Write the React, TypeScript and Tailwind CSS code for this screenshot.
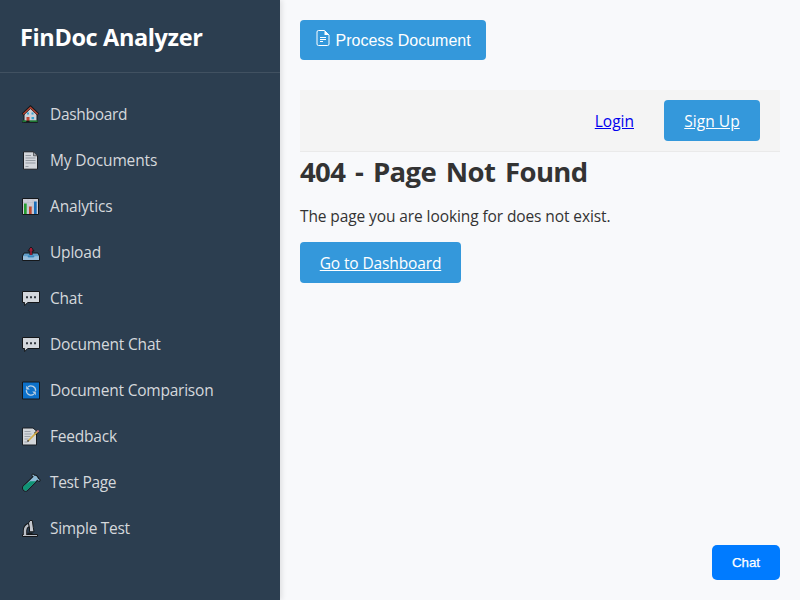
import React from 'react';

const Svg = ({ children }: { children: React.ReactNode }) => (
  <svg className="h-5 w-5 shrink-0 opacity-85" viewBox="0 0 20 20" fill="none">
    {children}
  </svg>
);

const House = () => (
  <Svg>
    <path d="M3 9v8h13V9L9.5 3z" fill="#e9e9ee" stroke="#111" strokeWidth="1" />
    <path d="M1.6 9.6 9.5 2l7.8 7.6" stroke="#111" strokeWidth="2.8" />
    <path d="M2.2 9.2 9.5 2.4l7.2 6.8" stroke="#d0442c" strokeWidth="1.4" />
    <path d="M6 7.5h2v2H6zM10.5 7.5h2v2h-2zM10.5 12h2.6v2.3h-2.6z" fill="#37b5e8" />
    <path d="M5.5 12h3v4h-3z" fill="#d9452f" />
    <path d="M1 15.6h16v2H1z" fill="#111" />
    <path d="M1.4 15.4h3.8v1.4H1.4zM8.6 15.4h8v1.4h-8z" fill="#20a83a" />
  </Svg>
);

const Page = () => (
  <Svg>
    <path d="M2.5.8h10l4 4v13.4h-14z" fill="#f1f1f4" stroke="#17191c" />
    <path d="M12.5.8v4h4z" fill="#b9bcc2" stroke="#222" strokeWidth=".6" />
    <path d="M4.5 4.5h5.5M4.5 7h10M4.5 9.5h10M4.5 12h10M4.5 15.5h3" stroke="#a5a9af" strokeWidth="1.1" />
  </Svg>
);

const Chart = () => (
  <Svg>
    <path d="M1.5 1.5h16v16h-16z" fill="#e7e5ee" stroke="#111" />
    <path d="M2 5.5h15M2 10h15M7 2v15M12 2v15" stroke="#cfccda" strokeWidth=".5" />
    <path d="M3 6.5h2.7V17H3z" fill="#24ad2a" />
    <path d="M8 9.5h2.7V17H8z" fill="#dc4a2b" />
    <path d="M13 4.5h2.7V17H13z" fill="#1675cc" />
  </Svg>
);

const Upload = () => (
  <Svg>
    <path d="m3 10-1.5 3v4.5h17V13L17 10z" fill="#6cb0e0" stroke="#111" />
    <path d="M2 13.2h4l1.5 1.5h5l1.5-1.5h4V17H2z" fill="#add3f2" />
    <path d="M7 12.7h6v1H7z" fill="#2584c8" />
    <path d="M10 5v7" stroke="#111" strokeWidth="3" />
    <path d="m6.9 8 3.1-4 3.1 4z" fill="#b91333" stroke="#111" />
    <path d="M10 5v7" stroke="#c91333" strokeWidth="1.5" />
  </Svg>
);

const Bubble = () => (
  <Svg>
    <path d="M1.5 2.5h17v11H6.7L3.6 16.6v-3.1H1.5z" fill="#f1f2f5" stroke="#111" strokeLinejoin="round" />
    <path d="M5 7.2h2v2H5zM9 7.2h2v2H9zM13 7.2h2v2h-2z" fill="#34363b" />
  </Svg>
);

const Sync = () => (
  <Svg>
    <path d="M1.5 1h17v17h-17z" fill="#087be0" stroke="#111" />
    <path d="M7 5.9a4.7 4.7 0 0 1 7.6 4M13 13.1a4.7 4.7 0 0 1-7.6-4" stroke="#d6e9fb" strokeWidth="1.3" />
    <path d="M5.2 4.8v3.6h3.6zM14.8 14.2v-3.6h-3.6z" fill="#d6e9fb" />
  </Svg>
);

const Memo = () => (
  <Svg>
    <path d="M1.5 1h10.5l3.5 3v14h-14z" fill="#f1f1f3" stroke="#17191c" />
    <path d="M3.5 4.5h6M3.5 7h7M3.5 9.5h6M3.5 12h4M3.5 15h3" stroke="#aeb1b6" />
    <path d="m14 7 3.5-3.4" stroke="#17191c" strokeWidth="2.8" />
    <path d="m7 14 9.400-9.300" stroke="#f0bd45" strokeWidth="1.7" />
    <path d="m6.500 14.500 1-1" stroke="#17191c" strokeWidth="1.500" />
    <path d="m16.2 4.9 1.4-1.4" stroke="#ee8794" strokeWidth="2" />
  </Svg>
);

const Tube = () => (
  <Svg>
    <path d="m12 2.2 6 5" stroke="#111" strokeWidth="3" strokeLinecap="round" />
    <path d="M14.3 5.4 4.6 15" stroke="#111" strokeWidth="6.8" strokeLinecap="round" />
    <path d="M14.3 5.4 4.6 15" stroke="#9fd0ed" strokeWidth="4.8" strokeLinecap="round" />
    <path d="M9 8.2h6L6.5 16.7a2.5 2.5 0 0 1-3.7-3.6z" fill="#0aa37c" />
    <path d="m12 2.2 6 5" stroke="#9fd0ed" strokeWidth="1.2" strokeLinecap="round" />
  </Svg>
);

const Microscope = () => (
  <Svg>
    <path d="M4 16V11.500c0-3 1.500-4.500 3.500-5.500" stroke="#111" strokeWidth="4.200" />
    <path d="M1.500 15.500h15v2h-15z" fill="#d4d6dc" stroke="#111" />
    <path d="M4 16V11.500c0-3 1.500-4.500 3.500-5.500" stroke="#d4d6dc" strokeWidth="2.400" />
    <path d="M7.500 4 9 1.500h2.300l1 7 .7 4.300H8.500V9z" fill="#dfe0e5" stroke="#111" />
    <path d="M6.500 14.300h5" stroke="#111" strokeWidth="1.200" />
  </Svg>
);

const items = [
  { label: 'Dashboard', Icon: House, spacing: 'tracking-[-0.3px]' },
  { label: 'My Documents', Icon: Page, spacing: 'tracking-[-0.12px]' },
  { label: 'Analytics', Icon: Chart, spacing: 'tracking-[-0.15px]' },
  { label: 'Upload', Icon: Upload, spacing: 'tracking-[-0.2px]' },
  { label: 'Chat', Icon: Bubble, spacing: 'tracking-[-0.2px]' },
  { label: 'Document Chat', Icon: Bubble, spacing: 'tracking-[-0.18px]' },
  { label: 'Document Comparison', Icon: Sync, spacing: 'tracking-[-0.22px]' },
  { label: 'Feedback', Icon: Memo, spacing: 'tracking-[-0.2px]' },
  { label: 'Test Page', Icon: Tube, spacing: 'tracking-[-0.35px]' },
  { label: 'Simple Test', Icon: Microscope, spacing: 'tracking-[-0.3px]' },
];

export default function App() {
  return (
    <div className="flex h-[600px] w-[800px] overflow-hidden bg-[#f8f9fb] font-['Open_Sans',sans-serif] text-[15.5px] text-[#333]">
      <aside className="z-10 w-[280px] shrink-0 bg-[#2c3e50] shadow-[2px_0_5px_rgba(0,0,0,0.1)]">
        <div className="h-[73px] border-b border-[#415161] px-5 pt-[19px]">
          <h2 className="text-[23.5px] leading-[36px] font-bold tracking-[-0.37px] whitespace-nowrap text-white">FinDoc Analyzer</h2>
        </div>
        <nav className="pt-[19px]">
          {items.map(({ label, Icon, spacing }) => (
            <a key={label} className="flex h-[46px] items-center gap-[9px] pl-[21px] whitespace-nowrap text-[#d5d8dc]">
              <Icon />
              <span className={spacing}>{label}</span>
            </a>
          ))}
        </nav>
      </aside>
      <main className="relative flex min-w-0 flex-1 flex-col items-start p-5">
        <button className="flex h-10 w-[186px] items-center rounded-[4px] bg-[#3498db] pt-px pl-4 font-['Liberation_Sans',Arial,sans-serif] text-base whitespace-nowrap text-white">
          <svg className="mr-[5.5px] -mt-[5px] h-4 w-[14px]" viewBox="0 0 14 16" fill="none" stroke="white">
            <path d="M8.5.5H2.5A1.500 1.500 0 0 0 1 2v12a1.500 1.500 0 0 0 1.500 1.500h9A1.500 1.500 0 0 0 13 14V5z" />
            <path d="M8.500.5V5H13z" fill="white" stroke="none" />
            <path d="M4 7.500h6M4 9.500h6M4 11.500h3" />
          </svg>
          Process Document
        </button>
        <header className="mt-[30px] flex h-[62px] w-full items-center justify-end gap-[30px] border-b border-[#eaeaea] bg-[#f4f4f4] pr-5">
          <a className="pt-[2px] text-[#0000ee] underline">Login</a>
          <a className="flex h-[41px] w-24 items-center justify-center rounded-[4px] bg-[#3498db] pt-[2px] tracking-[0.05px] text-white underline">Sign Up</a>
        </header>
        <h1 className="text-[27.5px] leading-[40px] font-bold tracking-[-0.6px] whitespace-nowrap [word-spacing:3.1px]">404 - Page Not Found</h1>
        <p className="mt-[11px] leading-[26px] tracking-[-0.1px] whitespace-nowrap">The page you are looking for does not exist.</p>
        <a className="mt-[13px] flex h-[41px] w-[161px] items-center justify-center rounded-[4px] bg-[#3498db] pt-[2px] tracking-[-0.13px] whitespace-nowrap text-white underline">Go to Dashboard</a>
        <button className="absolute right-5 bottom-5 h-[35px] w-[68px] rounded-[5px] bg-[#007bff] font-['Liberation_Sans',Arial,sans-serif] text-[13.333px] text-white [-webkit-text-stroke:0.25px_white]">Chat</button>
      </main>
    </div>
  );
}
